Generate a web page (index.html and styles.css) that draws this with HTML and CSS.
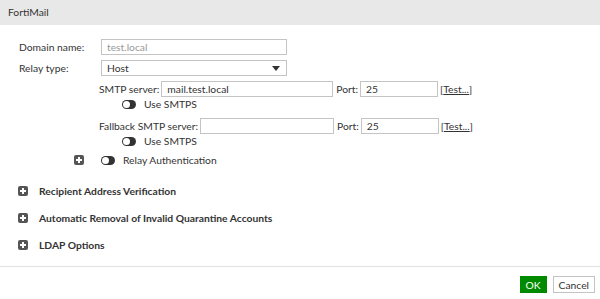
FILE: index.html
```html
<!DOCTYPE html>
<html lang="en">

<head>
    <meta charset="UTF-8">
    <title>FortiMail</title>
    <link rel="stylesheet" href="styles.css">
</head>

<body>
    <div class="header">FortiMail</div>

    <div class="content">
        <div class="row">
            <label class="label">Domain name:</label>
            <input class="field wide disabled" type="text" value="test.local" disabled>
        </div>
        <div class="row">
            <label class="label">Relay type:</label>
            <div class="field wide select">
                <span>Host</span>
                <span class="caret"></span>
            </div>
        </div>

        <div class="sub">
            <div class="row">
                <span class="sub-label">SMTP server:</span>
                <input class="field host" type="text" value="mail.test.local">
                <span class="port-label">Port:</span>
                <input class="field port" type="text" value="25">
                <span class="test">[<a href="#">Test...</a>]</span>
            </div>
            <div class="toggle-row">
                <span class="toggle"></span>
                <span>Use SMTPS</span>
            </div>
            <div class="row">
                <span class="sub-label">Fallback SMTP server:</span>
                <input class="field host short" type="text" value="">
                <span class="port-label">Port:</span>
                <input class="field port" type="text" value="25">
                <span class="test">[<a href="#">Test...</a>]</span>
            </div>
            <div class="toggle-row">
                <span class="toggle"></span>
                <span>Use SMTPS</span>
            </div>
        </div>

        <div class="auth-row">
            <span class="plus"></span>
            <span class="toggle"></span>
            <span>Relay Authentication</span>
        </div>

        <div class="section"><span class="plus"></span>Recipient Address Verification</div>
        <div class="section"><span class="plus"></span>Automatic Removal of Invalid Quarantine Accounts</div>
        <div class="section"><span class="plus"></span>LDAP Options</div>
    </div>

    <div class="footer">
        <button class="btn ok">OK</button>
        <button class="btn">Cancel</button>
    </div>
</body>

</html>
```

FILE: styles.css
```css
body {
    margin: 0;
    padding: 0;
    font-family: Lato, "Open Sans", sans-serif;
    font-size: 10.3px;
    color: #333;
    background-color: #fff;
}

.header {
    height: 25px;
    line-height: 25px;
    padding-left: 8px;
    background-color: #e8e8e8;
    color: #333;
}

.content {
    padding: 14px 0 0 19px;
    height: 242px;
    border-bottom: 1px solid #e2e2e2;
    box-sizing: border-box;
}

.row {
    display: flex;
    align-items: center;
    height: 16px;
    margin-bottom: 5px;
}

.label {
    width: 82px;
}

.field {
    box-sizing: border-box;
    height: 16px;
    border: 1px solid #c4c4c4;
    padding: 0 5px;
    font-family: inherit;
    font-size: 10.3px;
    color: #333;
    background-color: #fff;
    margin: 0;
    outline: none;
}

.wide {
    width: 186px;
}

.disabled {
    color: #999;
}

.select {
    display: flex;
    align-items: center;
    justify-content: space-between;
}

.caret {
    width: 0;
    height: 0;
    border-left: 4px solid transparent;
    border-right: 4px solid transparent;
    border-top: 5px solid #333;
    margin-right: 1px;
}

.sub {
    padding-left: 80px;
}

.sub .row {
    margin-bottom: 0;
}

.sub-label {
    margin-right: 2px;
}

.host {
    width: 172px;
}

.host.short {
    width: 134px;
}

.port-label {
    margin: 0 2px 0 3px;
}

.port {
    width: 78px;
}

.test {
    margin-left: 2px;
}

.test a {
    color: #333;
}

.toggle-row {
    display: flex;
    align-items: center;
    height: 14px;
    padding-left: 23px;
    margin-bottom: 7px;
}

.toggle {
    display: inline-block;
    position: relative;
    width: 14px;
    height: 9px;
    border-radius: 5px;
    background-color: #333;
    margin-right: 8px;
}

.toggle::after {
    content: "";
    position: absolute;
    left: 1px;
    top: 1px;
    width: 7px;
    height: 7px;
    border-radius: 50%;
    background-color: #fff;
}

.auth-row {
    display: flex;
    align-items: center;
    height: 16px;
    padding-left: 55px;
    margin-top: -3px;
}

.auth-row .plus {
    margin-right: 17px;
}

.plus {
    display: inline-block;
    position: relative;
    width: 10px;
    height: 10px;
    border-radius: 2px;
    background-color: #555;
    margin-right: 11px;
}

.plus::before,
.plus::after {
    content: "";
    position: absolute;
    background-color: #fff;
}

.plus::before {
    left: 2px;
    top: 4px;
    width: 6px;
    height: 2px;
}

.plus::after {
    left: 4px;
    top: 2px;
    width: 2px;
    height: 6px;
}

.section {
    display: flex;
    align-items: center;
    height: 16px;
    font-weight: bold;
    margin-bottom: 11px;
    margin-left: -1px;
}

.content .auth-row + .section {
    margin-top: 15px;
}

.footer {
    display: flex;
    justify-content: flex-end;
    padding: 9px 5px 0 0;
}

.btn {
    height: 17px;
    padding: 0 5px;
    border: 1px solid #c4c4c4;
    background-color: #fff;
    font-family: inherit;
    font-size: 10.3px;
    color: #333;
    margin-left: 6px;
}

.btn.ok {
    background-color: #008a00;
    border-color: #008a00;
    color: #fff;
    width: 27px;
}
```
